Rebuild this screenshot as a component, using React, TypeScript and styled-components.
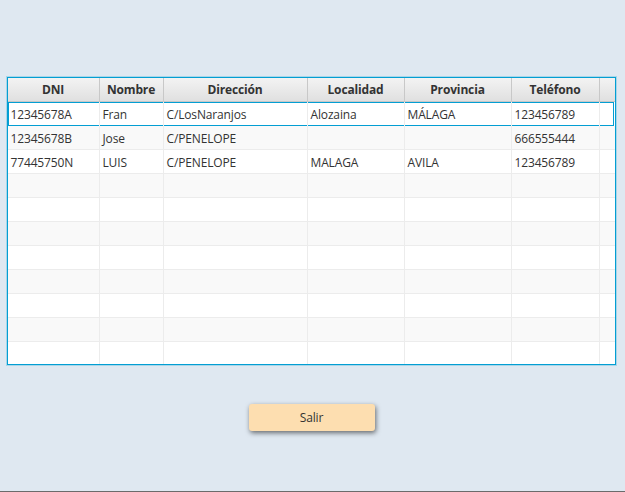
import { createGlobalStyle, styled } from "styled-components";

const GlobalStyle = createGlobalStyle`
  html, body {
    margin: 0;
    padding: 0;
    background: #dfe8f1;
  }
  * {
    box-sizing: border-box;
  }
`;

const Page = styled.div`
  height: 492px;
  padding: 77px 10px 0 7px;
  display: flex;
  flex-direction: column;
  align-items: center;
  gap: 39px;
  border-bottom: 1px solid #6b6b6b;
  font-family: "Open Sans", "Liberation Sans", sans-serif;
  font-size: 12px;
  letter-spacing: -0.15px;
  color: #333333;
`;

const Table = styled.div`
  width: 609px;
  height: 288px;
  border: 1px solid #039ed3;
  box-shadow: 0 0 0 1px rgba(3, 158, 211, 0.25);
  background: #ffffff;
  overflow: hidden;
`;

const COLS = "92px 64px 144px 97px 107px 88px 1fr";

const Header = styled.div`
  display: grid;
  grid-template-columns: ${COLS};
  height: 24px;
  background: linear-gradient(#f3f3f3, #e0e0e0);
  border-bottom: 1px solid #c8c8c8;
`;

const HeadCell = styled.div`
  display: flex;
  align-items: center;
  justify-content: center;
  font-weight: 700;
  border-right: 1px solid #c8c8c8;
  &:last-child {
    border-right: 0;
  }
`;

const Row = styled.div<{ $odd: boolean; $focused?: boolean }>`
  display: grid;
  grid-template-columns: ${COLS};
  height: 24px;
  background: ${(p) => (p.$odd ? "#f9f9f9" : "#ffffff")};
  box-shadow: ${(p) =>
    p.$focused ? "inset 0 0 0 1px #039ed3" : "inset 0 -1px 0 #ececec"};
  margin-right: ${(p) => (p.$focused ? "1px" : "0")};
`;

const Cell = styled.div`
  display: flex;
  align-items: center;
  padding-left: 3px;
  border-right: 1px solid #ececec;
  white-space: nowrap;
  overflow: hidden;
  &:last-child {
    border-right: 0;
  }
`;

const ExitButton = styled.button`
  width: 126px;
  height: 27px;
  margin-left: 1px;
  border: 0;
  border-radius: 3px;
  background: #fddeb0;
  box-shadow: 1px 2px 5px rgba(0, 0, 0, 0.55);
  font-family: inherit;
  font-size: 12px;
  letter-spacing: inherit;
  color: #333333;
  cursor: pointer;
`;

const headers = ["DNI", "Nombre", "Dirección", "Localidad", "Provincia", "Teléfono", ""];

const data = [
  ["12345678A", "Fran", "C/LosNaranjos", "Alozaina", "MÁLAGA", "123456789"],
  ["12345678B", "Jose", "C/PENELOPE", "", "", "666555444"],
  ["77445750N", "LUIS", "C/PENELOPE", "MALAGA", "AVILA", "123456789"],
];

export default function App() {
  const rows = Array.from({ length: 11 }, (_, i) => data[i] ?? ["", "", "", "", "", ""]);
  return (
    <>
      <GlobalStyle />
      <Page>
        <Table>
          <Header>
            {headers.map((h, i) => (
              <HeadCell key={i}>{h}</HeadCell>
            ))}
          </Header>
          {rows.map((r, i) => (
            <Row key={i} $odd={i % 2 === 1} $focused={i === 0}>
              {[...r, ""].map((c, j) => (
                <Cell key={j}>{c}</Cell>
              ))}
            </Row>
          ))}
        </Table>
        <ExitButton>Salir</ExitButton>
      </Page>
    </>
  );
}
